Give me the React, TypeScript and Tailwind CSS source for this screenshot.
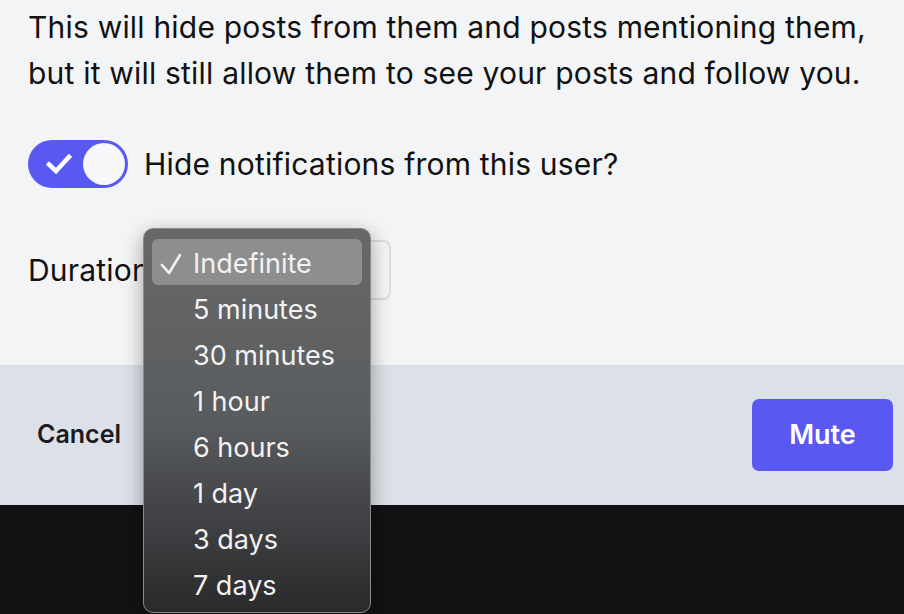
import { useState } from "react";

const durations = [
  "Indefinite",
  "5 minutes",
  "30 minutes",
  "1 hour",
  "6 hours",
  "1 day",
  "3 days",
  "7 days",
];

const MuteDialog = () => {
  const [hideNotifications, setHideNotifications] = useState(true);
  const [duration, setDuration] = useState("Indefinite");

  return (
    <div className="relative flex h-[614px] w-[904px] flex-col overflow-hidden font-['Inter',sans-serif] text-[#111]">
      <div className="h-[365px] bg-[#f3f4f6] pl-[28px] pt-[4px]">
        <p className="text-[30px] leading-[46px] tracking-[0.2px]">
          This will hide posts from them and posts mentioning them,
          <br />
          but it will still allow them to see your posts and follow you.
        </p>

        <div className="mt-[44px] flex items-center">
          <button
            type="button"
            onClick={() => setHideNotifications((v) => !v)}
            className="flex h-[48px] w-[100px] items-center justify-between rounded-full bg-[#5a58f2] pl-[18px] pr-[3px]"
          >
            <svg width="26" height="22" viewBox="0 0 26 22" fill="none">
              <path
                d="M3 11.5 L10 18 L23 4"
                stroke="white"
                strokeWidth="4.5"
                strokeLinecap="square"
              />
            </svg>
            <span className="h-[42px] w-[42px] rounded-full bg-[#f7f7f9]" />
          </button>
          <span className="ml-[16px] text-[30px] tracking-[0.2px]">
            Hide notifications from this user?
          </span>
        </div>

        <div className="mt-[52px] flex items-center">
          <span className="w-[115px] text-[30px] tracking-[0.2px]">Duration</span>
          <div className="relative">
            <div className="h-[60px] w-[248px] rounded-[8px] border-2 border-[#dcdcdc] bg-[#f5f5f5]" />
            <div className="absolute left-0 top-[-12px] z-10 w-[228px] rounded-[10px] border border-[#8a8a8a] bg-gradient-to-b from-[#686868] via-[#595c5f] to-[#2a2a2c] px-[8px] pb-[5px] pt-[10px] shadow-[0_6px_20px_rgba(0,0,0,0.35)]">
              {durations.map((d) => (
                <div
                  key={d}
                  onClick={() => setDuration(d)}
                  className={`flex h-[46px] items-center rounded-[6px] pt-[4px] text-[27px] text-[#f2f2f2] ${
                    d === duration ? "bg-[#8e8e8e]" : ""
                  }`}
                >
                  <span className="flex w-[41px] justify-start pl-[8px]">
                    {d === duration && (
                      <svg width="22" height="22" viewBox="0 0 22 22" fill="none">
                        <path
                          d="M2 12 L9 20 L20 2"
                          stroke="#f2f2f2"
                          strokeWidth="2.6"
                          strokeLinecap="round"
                          strokeLinejoin="round"
                        />
                      </svg>
                    )}
                  </span>
                  {d}
                </div>
              ))}
            </div>
          </div>
        </div>
      </div>

      <div className="flex h-[140px] items-center justify-between bg-[#dce1e8] pl-[37px] pr-[11px]">
        <span className="text-[25px] font-semibold text-[#1b1b1f]">Cancel</span>
        <button
          type="button"
          className="h-[72px] w-[141px] rounded-[7px] bg-[#5a58f2] text-[27px] font-semibold text-white"
        >
          Mute
        </button>
      </div>

      <div className="flex-1 bg-[#121215]" />
    </div>
  );
};

export default function App() {
  return <MuteDialog />;
}
